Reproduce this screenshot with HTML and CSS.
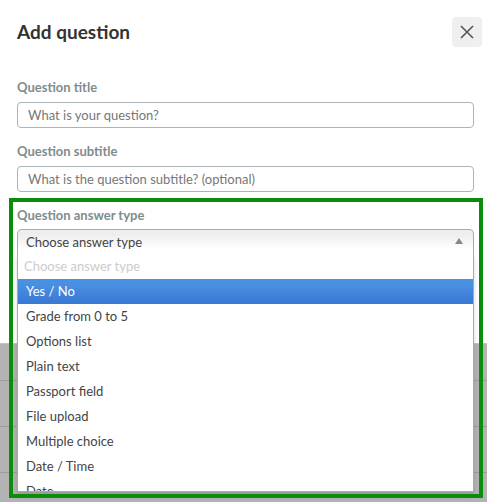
FILE: index.html
```html
<!DOCTYPE html>
<html lang="en">
<head>
    <meta charset="UTF-8">
    <meta name="viewport" content="width=device-width, initial-scale=1.0">
    <title>Add question</title>
    <link rel="stylesheet" href="styles.css">
</head>
<body>
    <div class="modal">
        <div class="modal-header">
            <h1>Add question</h1>
            <button class="close-btn" aria-label="Close">
                <svg width="14" height="14" viewBox="0 0 14 14">
                    <path d="M1 1 L13 13 M13 1 L1 13" stroke="#555" stroke-width="1.6" fill="none"/>
                </svg>
            </button>
        </div>
        <div class="modal-body">
            <div class="form-group">
                <label for="title">Question title</label>
                <input type="text" id="title" placeholder="What is your question?">
            </div>
            <div class="form-group">
                <label for="subtitle">Question subtitle</label>
                <input type="text" id="subtitle" placeholder="What is the question subtitle? (optional)">
            </div>
            <div class="form-group answer-type">
                <label>Question answer type</label>
                <div class="chosen">
                    <div class="chosen-single">
                        <span>Choose answer type</span>
                        <i class="arrow"></i>
                    </div>
                    <ul class="chosen-drop">
                        <li class="disabled">Choose answer type</li>
                        <li class="highlighted">Yes / No</li>
                        <li>Grade from 0 to 5</li>
                        <li>Options list</li>
                        <li>Plain text</li>
                        <li>Passport field</li>
                        <li>File upload</li>
                        <li>Multiple choice</li>
                        <li>Date / Time</li>
                        <li>Date</li>
                        <li>Number</li>
                    </ul>
                </div>
            </div>
        </div>
    </div>
    <div class="backdrop">
        <div class="backdrop-row first"></div>
        <div class="backdrop-row"></div>
        <div class="backdrop-row"></div>
    </div>
    <div class="highlight-frame"></div>
</body>
</html>
```

FILE: styles.css
```css
body {
    font-family: Lato, "Open Sans", sans-serif;
    margin: 0;
    padding: 0;
    background-color: #b3b3b3;
    color: #333;
    position: relative;
    height: 502px;
    overflow: hidden;
}
.modal {
    background-color: #fff;
    height: 343px;
    position: relative;
    z-index: 2;
}
.modal-header {
    display: flex;
    justify-content: space-between;
    align-items: center;
    padding: 17px 5px 0 17px;
}
.modal-header h1 {
    margin: 0;
    font-size: 19px;
    font-weight: bold;
    line-height: 30px;
    color: #333;
}
.close-btn {
    width: 30px;
    height: 30px;
    border: none;
    border-radius: 4px;
    background-color: #efefef;
    display: flex;
    align-items: center;
    justify-content: center;
    padding: 0;
}
.modal-body {
    padding: 32px 13px 0 17px;
}
.form-group {
    margin-bottom: 15px;
}
.form-group label {
    display: block;
    font-size: 13px;
    font-weight: bold;
    line-height: 16px;
    color: #7f8c8d;
    margin-bottom: 7px;
}
.form-group input[type="text"] {
    display: block;
    width: 100%;
    height: 26px;
    padding: 0 10px;
    border: 1px solid #aab3b7;
    border-radius: 4px;
    box-sizing: border-box;
    font-family: inherit;
    font-size: 13px;
    color: #333;
}
.form-group input::placeholder {
    color: #777;
}
.answer-type label {
    margin-bottom: 6px;
}
.chosen {
    position: relative;
    font-size: 13px;
}
.chosen-single {
    display: flex;
    justify-content: space-between;
    align-items: center;
    height: 25px;
    padding: 0 10px 0 8px;
    border: 1px solid #aaa;
    border-bottom: none;
    border-radius: 5px 5px 0 0;
    box-sizing: border-box;
    background: linear-gradient(#eee 20%, #fff 80%);
    color: #444;
}
.arrow {
    width: 0;
    height: 0;
    border-left: 4px solid transparent;
    border-right: 4px solid transparent;
    border-bottom: 6px solid #888;
    margin-top: -2px;
}
.chosen-drop {
    position: absolute;
    top: 25px;
    left: 0;
    right: 0;
    margin: 0;
    padding: 0;
    list-style: none;
    max-height: 237px;
    overflow: hidden;
    background-color: #fff;
    border: 1px solid #aaa;
    border-top: none;
    box-shadow: 0 4px 5px rgba(0, 0, 0, 0.15);
}
.chosen-drop li {
    padding: 5px 8px;
    line-height: 15px;
    color: #444;
}
.chosen-drop li.disabled {
    padding-left: 6px;
    color: #ccc;
}
.chosen-drop li.highlighted {
    background: linear-gradient(#4a90e2 20%, #3a7bd5 90%);
    color: #fff;
}
.backdrop-row {
    height: 36px;
    border-bottom: 1px solid #9c9c9c;
}
.backdrop-row.first {
    border-top: 1px solid #c4c4c4;
}
.backdrop-row + .backdrop-row {
    height: 45px;
}
.highlight-frame {
    position: absolute;
    left: 9px;
    top: 198px;
    width: 474px;
    height: 300px;
    box-sizing: border-box;
    border: 4px solid #0b8c0b;
    z-index: 3;
}
```
